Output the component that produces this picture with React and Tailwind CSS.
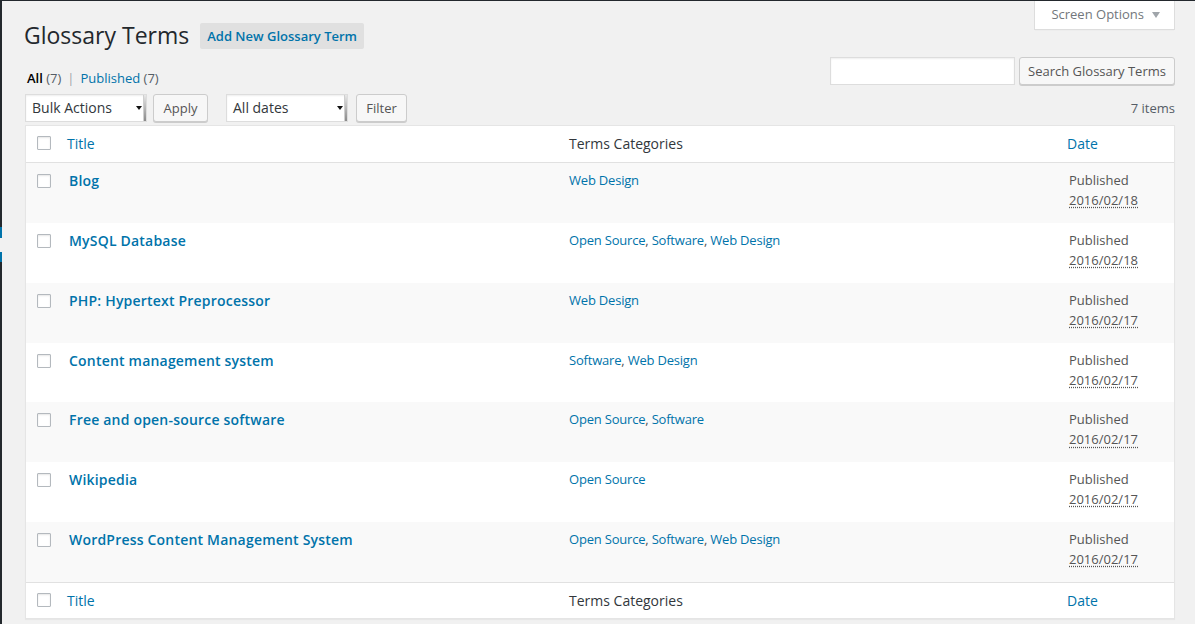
import React from 'react';

const rows = [
  { title: 'Blog', cats: ['Web Design'], date: '2016/02/18' },
  { title: 'MySQL Database', cats: ['Open Source', 'Software', 'Web Design'], date: '2016/02/18' },
  { title: 'PHP: Hypertext Preprocessor', cats: ['Web Design'], date: '2016/02/17' },
  { title: 'Content management system', cats: ['Software', 'Web Design'], date: '2016/02/17' },
  { title: 'Free and open-source software', cats: ['Open Source', 'Software'], date: '2016/02/17' },
  { title: 'Wikipedia', cats: ['Open Source'], date: '2016/02/17' },
  { title: 'WordPress Content Management System', cats: ['Open Source', 'Software', 'Web Design'], date: '2016/02/17' },
];

const Checkbox = () => (
  <span className="block w-[14px] h-[14px] bg-white border border-[#b4b9be] rounded-[1px] shadow-[inset_0_1px_2px_rgba(0,0,0,0.1)]" />
);

const Button = ({ children, className = '' }) => (
  <button className={`h-[28px] bg-[#f7f7f7] border border-[#ccc] rounded-[3px] shadow-[0_1px_0_#ccc] text-[13px] text-[#555] leading-[26px] ${className}`}>
    {children}
  </button>
);

const Select = ({ label }) => (
  <div className="flex items-stretch h-[28px] w-[122px] bg-white border border-[#ddd] shadow-[inset_0_1px_2px_rgba(0,0,0,0.07)] text-[14px] text-[#32373c]">
    <span className="flex-1 pl-[6px] leading-[26px]">{label}</span>
    <span className="flex items-center justify-center w-[8px]">
      <span className="w-0 h-0 border-l-[3px] border-r-[3px] border-t-[4px] border-l-transparent border-r-transparent border-t-[#111]" />
    </span>
    <span className="w-[3px] bg-gradient-to-b from-[#e8e8e8] to-[#8a8a8a] border-l border-[#cfcfcf]" />
  </div>
);

const HeadRow = ({ top }) => (
  <div className={`flex bg-white text-[14px] leading-[19.6px] ${top ? 'h-[37px] border-b' : 'h-[36px] border-t'} border-[#e1e1e1]`}>
    <div className="w-[31px] shrink-0 pl-[11px] pt-[10px]">
      <Checkbox />
    </div>
    <div className="w-[502px] shrink-0 pl-[10px] pt-[8px] text-[#0073aa]">Title</div>
    <div className="w-[498px] shrink-0 pl-[10px] pt-[8px] text-[#32373c]">Terms Categories</div>
    <div className="flex-1 pl-[10px] pt-[8px] text-[#0073aa]">Date</div>
  </div>
);

export default function App() {
  return (
    <div className="flex flex-col h-[624px] bg-[#f1f1f1] overflow-hidden font-['Open_Sans',sans-serif] text-[#444]">
      <div className="h-px bg-[#23282d] shrink-0" />
      <div className="flex flex-1">
        {/* admin menu edge */}
        <div className="flex flex-col w-[2px] shrink-0">
          <div className="h-[226px] bg-[#23282d]" />
          <div className="h-[11px] bg-[#0073aa]" />
          <div className="h-[14px] bg-[#f1f1f1]" />
          <div className="h-[10px] bg-[#0073aa]" />
          <div className="flex-1 bg-[#23282d]" />
        </div>

        <div className="flex-1 pl-[23px] pr-[20px]">
          {/* title row */}
          <div className="flex justify-between items-start h-[49px]">
            <div className="flex items-start pt-[19px] -ml-[1px]">
              <h1 className="text-[23px] leading-[30px] text-[#23282d]">Glossary Terms</h1>
              <span className="ml-[11px] mt-[3px] px-[7px] h-[26px] leading-[26px] bg-[#e0e0e0] rounded-[2px] text-[13px] font-semibold text-[#0073aa]">
                Add New Glossary Term
              </span>
            </div>
            <div className="flex items-center h-[29px] pl-[16px] pr-[14px] bg-white border border-t-0 border-[#ddd] shadow-[0_1px_1px_-1px_rgba(0,0,0,0.1)] text-[13px] text-[#72777c]">
              Screen Options
              <span className="ml-[8px] w-0 h-0 border-l-[4px] border-r-[4px] border-t-[6px] border-l-transparent border-r-transparent border-t-[#a0a5aa]" />
            </div>
          </div>

          {/* views + search */}
          <div className="flex justify-between items-start h-[35px]">
            <div className="mt-[15px] text-[13px] leading-[26px] text-[#555d66]">
              <span className="pl-[2px] font-semibold text-black">All</span> (7)
              <span className="mx-[6px] text-[#a0a5aa]">|</span>
              <span className="text-[#0073aa]">Published</span> (7)
            </div>
            <div className="flex items-start gap-[4px] mt-[7px]">
              <div className="w-[185px] h-[28px] bg-white border border-[#ddd] shadow-[inset_0_1px_2px_rgba(0,0,0,0.07)]" />
              <Button className="w-[156px]">Search Glossary Terms</Button>
            </div>
          </div>

          {/* tablenav */}
          <div className="flex items-start mt-[9px] h-[31px]">
            <Select label="Bulk Actions" />
            <div className="ml-[6px]">
              <Button className="w-[55px]">Apply</Button>
            </div>
            <div className="ml-[18px]">
              <Select label="All dates" />
            </div>
            <div className="ml-[8px]">
              <Button className="w-[51px]">Filter</Button>
            </div>
            <div className="ml-auto text-[13px] leading-[28px] text-[#555d66]">7 items</div>
          </div>

          {/* list table */}
          <div className="bg-white border border-[#e5e5e5] shadow-[0_1px_1px_rgba(0,0,0,0.04)]">
            <HeadRow top />
            {rows.map((r, i) => (
              <div key={r.title} className={`flex h-[59.85px] ${i % 2 === 0 ? 'bg-[#f9f9f9]' : 'bg-white'}`}>
                <div className="w-[31px] shrink-0 pl-[11px] pt-[11px]">
                  <Checkbox />
                </div>
                <div className="w-[502px] shrink-0 pl-[12px] pt-[7px] text-[14px] leading-[21px] font-semibold tracking-[0.2px] text-[#0073aa]">
                  {r.title}
                </div>
                <div className="w-[498px] shrink-0 pl-[10px] pt-[7px] text-[13px] leading-[20px] tracking-[-0.2px] text-[#555]">
                  {r.cats.map((c, j) => (
                    <React.Fragment key={c}>
                      {j > 0 && ', '}
                      <span className="text-[#0073aa]">{c}</span>
                    </React.Fragment>
                  ))}
                </div>
                <div className="flex-1 pl-[12px] pt-[7px] text-[13px] leading-[20px] text-[#555]">
                  <div>Published</div>
                  <div>
                    <span className="underline decoration-dotted decoration-[#555] underline-offset-[2px]">{r.date}</span>
                  </div>
                </div>
              </div>
            ))}
            <HeadRow />
          </div>
        </div>
      </div>
    </div>
  );
}
